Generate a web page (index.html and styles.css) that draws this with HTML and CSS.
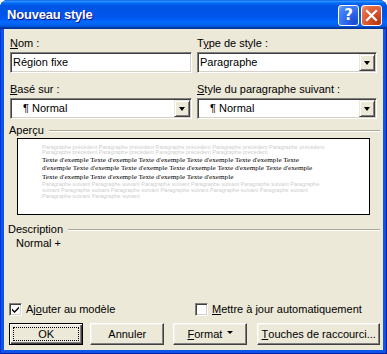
FILE: index.html
```html
<!DOCTYPE html>
<html lang="fr">
<head>
<meta charset="utf-8">
<title>Nouveau style</title>
<link rel="stylesheet" href="styles.css">
</head>
<body>
<div class="window">
  <div class="titlebar">
    <span class="title">Nouveau style</span>
    <div class="tb-buttons">
      <span class="tb-btn help">?</span>
      <span class="tb-btn close"><svg width="13" height="13" viewBox="0 0 13 13"><path d="M2 2 L11 11 M11 2 L2 11" stroke="#fff" stroke-width="2.2" stroke-linecap="square"/></svg></span>
    </div>
  </div>
  <div class="client">
    <div class="fields">
      <div class="field">
        <div class="label"><u>N</u>om :</div>
        <div class="box textbox">Région fixe</div>
      </div>
      <div class="field">
        <div class="label">T<u>y</u>pe de style :</div>
        <div class="box select"><span class="val plain">Paragraphe</span><span class="drop"><span class="arrow"></span></span></div>
      </div>
      <div class="field">
        <div class="label"><u>B</u>asé sur :</div>
        <div class="box select"><span class="val">¶ Normal</span><span class="drop"><span class="arrow"></span></span></div>
      </div>
      <div class="field">
        <div class="label"><u>S</u>tyle du paragraphe suivant :</div>
        <div class="box select"><span class="val">¶ Normal</span><span class="drop"><span class="arrow"></span></span></div>
      </div>
    </div>

    <div class="group-head"><span>Aperçu</span><span class="rule"></span></div>
    <div class="preview">
      <div class="prev">
        <div>Paragraphe précédent Paragraphe précédent Paragraphe précédent Paragraphe précédent Paragraphe précédent</div>
        <div>Paragraphe précédent Paragraphe précédent Paragraphe précédent Paragraphe précédent</div>
      </div>
      <div class="sample">
        <div>Texte d'exemple Texte d'exemple Texte d'exemple Texte d'exemple Texte d'exemple Texte</div>
        <div>d'exemple Texte d'exemple Texte d'exemple Texte d'exemple Texte d'exemple Texte d'exemple</div>
        <div>Texte d'exemple Texte d'exemple Texte d'exemple Texte d'exemple</div>
      </div>
      <div class="next">
        <div>Paragraphe suivant Paragraphe suivant Paragraphe suivant Paragraphe suivant Paragraphe suivant Paragraphe</div>
        <div>suivant Paragraphe suivant Paragraphe suivant Paragraphe suivant Paragraphe suivant Paragraphe suivant</div>
        <div>Paragraphe suivant Paragraphe suivant</div>
      </div>
    </div>

    <div class="group-head desc-head"><span>Description</span><span class="rule"></span></div>
    <div class="desc-text">Normal +</div>

    <div class="checks">
      <div class="check first">
        <span class="cbox"><svg width="9" height="9" viewBox="0 0 9 9"><path d="M1 3.5 L3.5 6 L8 1.5 L8 3.5 L3.5 8 L1 5.5 Z" fill="#000"/></svg></span>
        <span>Aj<u>o</u>uter au modèle</span>
      </div>
      <div class="check">
        <span class="cbox"></span>
        <span><u>M</u>ettre à jour automatiquement</span>
      </div>
    </div>

    <div class="buttons">
      <div class="btn default"><span class="focus">OK</span></div>
      <div class="btn b-annuler">Annuler</div>
      <div class="btn b-format"><span><u>F</u>ormat</span><span class="tri"></span></div>
      <div class="btn b-touches"><u>T</u>ouches de raccourci...</div>
    </div>
  </div>
</div>
</body>
</html>
```

FILE: styles.css
```css
html, body {
  margin: 0;
  padding: 0;
  background: #fff;
}
body {
  font-family: "Liberation Sans", Arial, sans-serif;
  font-size: 11px;
  color: #000;
}
.window {
  width: 387px;
  height: 354px;
  display: flex;
  flex-direction: column;
  background: #0B56EA;
  border-radius: 8px 8px 0 0;
  overflow: hidden;
  box-shadow: inset 1px 0 #0831D9, inset -1px 0 #001EA0, inset 0 -1px #001EA0;
}
.titlebar {
  height: 29px;
  flex: none;
  display: flex;
  align-items: flex-start;
  justify-content: space-between;
  padding: 0 5px 0 7px;
  background: linear-gradient(to bottom, #0058EE 0%, #3593FF 4%, #288EFF 6%, #127DFF 8%, #036FFC 10%, #0262EE 14%, #0057E5 20%, #0054E3 24%, #0055EB 56%, #005BF5 66%, #026AFE 76%, #0062EF 86%, #0052D6 92%, #0040AB 94%, #003092 100%);
}
.title {
  margin-top: 7px;
  line-height: 15px;
  font-family: "Liberation Sans", Arial, sans-serif;
  font-weight: bold;
  font-size: 13px;
  letter-spacing: -0.2px;
  color: #fff;
  text-shadow: 1px 1px #0F1089;
}
.tb-buttons {
  display: flex;
  gap: 2px;
  margin-top: 5px;
}
.tb-btn {
  width: 21px;
  height: 21px;
  box-sizing: border-box;
  border: 1px solid #fff;
  border-radius: 3px;
  display: flex;
  align-items: center;
  justify-content: center;
  color: #fff;
}
.help {
  background: radial-gradient(circle at 85% 85%, #1C4AD0 0%, #2E69F0 45%, #4A86FA 80%, #86B2FF 100%);
  font-family: "DejaVu Sans", sans-serif;
  font-weight: bold;
  font-size: 15px;
  line-height: 19px;
}
.close {
  background: radial-gradient(circle at 85% 85%, #B9360F 0%, #D9532B 45%, #E5714A 80%, #F3A88C 100%);
}
.client {
  flex: 1;
  margin: 0 4px 4px 4px;
  background: #ECE9D8;
  padding: 8px 3px 0 6px;
  display: flex;
  flex-direction: column;
}
.fields {
  display: grid;
  grid-template-columns: 182px 180px;
  column-gap: 5px;
  row-gap: 10px;
}
.field {
  display: flex;
  flex-direction: column;
}
.label {
  line-height: 13px;
  height: 13px;
  margin-bottom: 2px;
  white-space: nowrap;
}
.box {
  height: 21px;
  box-sizing: border-box;
  background: #fff;
  border: 1px solid;
  border-color: #808080 #fff #fff #808080;
  box-shadow: inset 1px 1px #404040, inset -1px -1px #D4D0C8;
  display: flex;
  align-items: center;
  line-height: 17px;
  white-space: nowrap;
}
.textbox {
  padding-left: 2px;
}
.select {
  padding: 1px 1px 1px 1px;
  align-items: stretch;
}
.select .val {
  flex: 1;
  padding-left: 11px;
  display: flex;
  align-items: center;
}
.select .val.plain {
  padding-left: 1px;
}
.drop {
  width: 16px;
  flex: none;
  background: #ECE9D8;
  box-sizing: border-box;
  border: 1px solid;
  border-color: #ECE9D8 #404040 #404040 #ECE9D8;
  box-shadow: inset 1px 1px #fff, inset -1px -1px #808080;
  display: flex;
  align-items: center;
  justify-content: center;
}
.arrow {
  width: 0;
  height: 0;
  border-left: 3.5px solid transparent;
  border-right: 3.5px solid transparent;
  border-top: 4px solid #000;
  margin-top: 1px;
}
.group-head {
  display: flex;
  align-items: center;
  height: 13px;
  line-height: 13px;
  margin: 5px 0 0 -1px;
}
.rule {
  flex: 1;
  height: 0;
  border-top: 1px solid #ACA899;
  border-bottom: 1px solid #fff;
  margin-left: 5px;
}
.desc-head {
  margin-top: 8px;
  margin-left: -2px;
}
.preview {
  margin: 1px 0 0 7px;
  width: 353px;
  height: 77px;
  box-sizing: border-box;
  border: 1px solid #000;
  background: #fff;
  padding: 6px 0 0 24px;
  white-space: nowrap;
  overflow: hidden;
}
.prev, .next {
  font-family: "Liberation Sans", Arial, sans-serif;
  font-size: 5.56px;
  color: #CDCDCD;
}
.prev div {
  line-height: 5px;
  height: 5px;
}
.next div {
  line-height: 6px;
  height: 6px;
}
.sample {
  font-family: "Liberation Serif", "Times New Roman", serif;
  font-size: 7.15px;
  color: #000;
  margin-top: 0.5px;
}
.sample div {
  line-height: 8.5px;
  height: 8.5px;
}
.next {
  margin-top: 0;
}
.desc-text {
  margin: 1px 0 0 6px;
  line-height: 13px;
}
.checks {
  display: flex;
  margin-top: 53px;
  margin-left: -1px;
  height: 13px;
  line-height: 13px;
}
.check {
  display: flex;
  align-items: center;
  gap: 4px;
  white-space: nowrap;
}
.check.first {
  width: 186px;
}
.cbox {
  width: 13px;
  height: 13px;
  box-sizing: border-box;
  background: #fff;
  border: 1px solid;
  border-color: #808080 #fff #fff #808080;
  box-shadow: inset 1px 1px #404040, inset -1px -1px #D4D0C8;
  display: flex;
  align-items: center;
  justify-content: center;
}
.buttons {
  display: flex;
  margin-top: 7px;
  margin-left: -1px;
}
.btn {
  width: 75px;
  height: 22px;
  box-sizing: border-box;
  background: #ECE9D8;
  border: 1px solid;
  border-color: #fff #404040 #404040 #fff;
  box-shadow: inset -1px -1px #808080, inset 1px 1px #F4F2E8;
  display: flex;
  align-items: center;
  justify-content: center;
  line-height: 13px;
  white-space: nowrap;
}
.btn.default {
  border: 1px solid #000;
  box-shadow: inset 1px 1px #fff, inset -1px -1px #404040, inset -2px -2px #808080;
  padding: 3px;
}
.btn.default .focus {
  flex: 1;
  align-self: stretch;
  border: 1px dotted #000;
  display: flex;
  align-items: center;
  justify-content: center;
}
.b-annuler {
  margin-left: 7px;
}
.b-format {
  margin-left: 9px;
  gap: 5px;
}
.tri {
  width: 0;
  height: 0;
  border-left: 3px solid transparent;
  border-right: 3px solid transparent;
  border-top: 3px solid #000;
  margin-top: -3px;
}
.b-touches {
  margin-left: 10px;
  width: 124px;
}
```
